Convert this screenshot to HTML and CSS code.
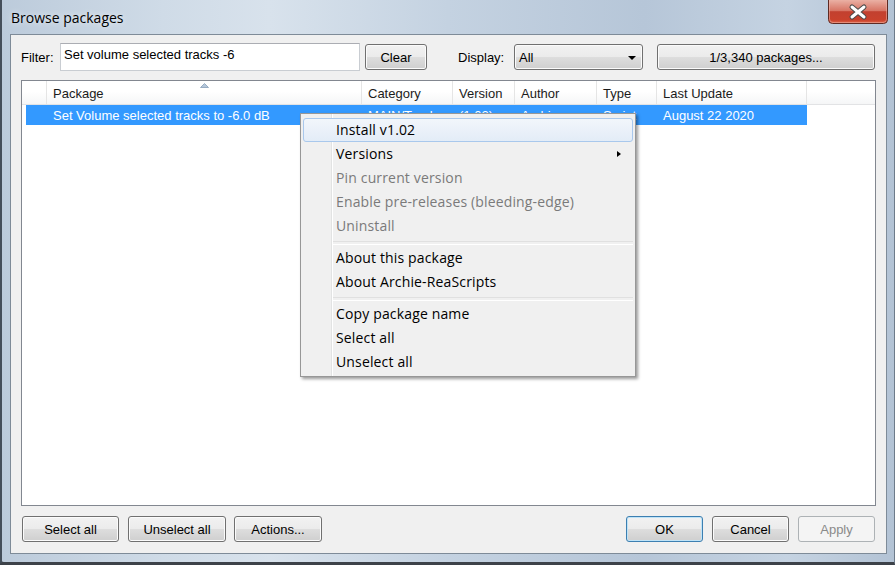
FILE: index.html
```html
<!DOCTYPE html>
<html lang="en">
  <head>
    <meta charset="UTF-8" />
    <title>Browse packages</title>
    <link rel="stylesheet" href="styles.css">
  </head>
  <body>
    <div class="window">
      <div class="titlebar">
        <span class="title">Browse packages</span>
        <div class="close">
          <svg width="60" height="24" viewBox="0 0 60 24">
            <defs>
              <linearGradient id="red" x1="0" y1="0" x2="0" y2="1">
                <stop offset="0" stop-color="#eab0a4" />
                <stop offset="0.45" stop-color="#d77565" />
                <stop offset="0.5" stop-color="#c2402f" />
                <stop offset="0.85" stop-color="#c9412c" />
                <stop offset="1" stop-color="#e2694c" />
              </linearGradient>
            </defs>
            <path d="M0.5 0 V19.5 Q0.5 23.5 4.5 23.5 H55.5 Q59.5 23.5 59.5 19.5 V0" fill="url(#red)" stroke="#5e2a23" />
            <path d="M1.5 0 V19 Q1.5 22.5 5 22.5 H55 Q58.5 22.5 58.5 19 V0" fill="none" stroke="#f0b9ae" stroke-opacity="0.5" />
            <path d="M24 7 L36 17 M36 7 L24 17" stroke="#4a4a4a" stroke-width="5" stroke-linecap="round" />
            <path d="M24 7 L36 17 M36 7 L24 17" stroke="#ffffff" stroke-width="3" stroke-linecap="round" />
          </svg>
        </div>
      </div>

      <div class="client">
        <div class="toprow">
          <span class="lbl lbl-filter">Filter:</span>
          <div class="textbox">Set volume selected tracks -6</div>
          <button class="btn btn-clear">Clear</button>
          <span class="lbl lbl-display">Display:</span>
          <div class="combo">
            <span>All</span>
            <span class="arrow"></span>
          </div>
          <button class="btn btn-count">1/3,340 packages...</button>
        </div>

        <div class="list">
          <div class="header">
            <div class="col c0"></div>
            <div class="col c1">
              Package
              <svg class="sort" width="9" height="5" viewBox="0 0 9 5">
                <path d="M0.5 4.5 L4.5 0.5 L8.5 4.5 Z" fill="#b5c7da" stroke="#97acc3" stroke-width="1" />
              </svg>
            </div>
            <div class="col c2">Category</div>
            <div class="col c3">Version</div>
            <div class="col c4">Author</div>
            <div class="col c5">Type</div>
            <div class="col c6">Last Update</div>
          </div>
          <div class="row selected">
            <div class="cell r0"></div>
            <div class="cell c1">Set Volume selected tracks to -6.0 dB</div>
            <div class="cell c2">MAIN/Track</div>
            <div class="cell c3">(1.02)</div>
            <div class="cell c4">Archie</div>
            <div class="cell c5">Script</div>
            <div class="cell c6">August 22 2020</div>
          </div>
        </div>

        <div class="bottomrow">
          <button class="btn btn-sel">Select all</button>
          <button class="btn btn-unsel">Unselect all</button>
          <button class="btn btn-actions">Actions...</button>
          <span class="spacer"></span>
          <button class="btn btn-ok">OK</button>
          <button class="btn btn-cancel">Cancel</button>
          <button class="btn btn-apply" disabled>Apply</button>
        </div>
      </div>

      <!-- right-click menu over the list -->
      <div class="menu">
        <div class="gutter"></div>
        <div class="item hot">Install v1.02</div>
        <div class="item sub">Versions<span class="subarrow"></span></div>
        <div class="item off">Pin current version</div>
        <div class="item off">Enable pre-releases (bleeding-edge)</div>
        <div class="item off">Uninstall</div>
        <div class="sep"></div>
        <div class="item">About this package</div>
        <div class="item">About Archie-ReaScripts</div>
        <div class="sep"></div>
        <div class="item">Copy package name</div>
        <div class="item">Select all</div>
        <div class="item">Unselect all</div>
      </div>
    </div>
  </body>
</html>
```

FILE: styles.css
```css
* {
  margin: 0;
  padding: 0;
  box-sizing: border-box;
}
body {
  font-family: "Liberation Sans", Arial, sans-serif;
  font-size: 13px;
  background: #3b4148;
}

.window {
  position: relative;
  width: 895px;
  height: 565px;
  border-left: 2px solid #454f5a;
  border-right: 1px solid #6d7b8a;
  border-bottom: 3px solid #3d4249;
  border-bottom-left-radius: 4px;
  background: linear-gradient(to right, #bccbdb 0%, #cfdbe7 18%, #d8e2ec 30%, #c4d2e1 50%, #b6c6d8 72%, #c5d3e2 88%, #b3c3d5 100%);
}

.titlebar {
  display: flex;
  justify-content: space-between;
  align-items: flex-start;
  height: 34px;
}
.title {
  font-family: "Open Sans", sans-serif;
  font-size: 14px;
  padding: 8px 0 0 9px;
  color: #000;
  text-shadow: 0 0 6px rgba(255, 255, 255, 0.8);
}
.close {
  margin-right: 6px;
  height: 24px;
}
.close svg {
  display: block;
}

.client {
  margin: 0 7px 0 8px;
  height: 520px;
  border: 1px solid #7e8b98;
  background: #f0f0f0;
  padding: 8px 10px 0 10px;
}

.toprow {
  display: flex;
  align-items: center;
  height: 28px;
}
.lbl {
  color: #000;
}
.lbl-filter {
  width: 39px;
}
.lbl-display {
  width: 56px;
  margin-left: 31px;
}
.textbox {
  width: 300px;
  height: 28px;
  background: #fff;
  border: 1px solid #c9cdd2;
  border-top-color: #abadb3;
  padding: 3px 0 0 3px;
}

.btn {
  font-family: "Liberation Sans", Arial, sans-serif;
  font-size: 13px;
  color: #000;
  height: 26px;
  border: 1px solid #707070;
  border-radius: 3px;
  background: linear-gradient(#f2f2f2 0%, #ebebeb 48%, #dddddd 52%, #cfcfcf 100%);
  box-shadow: inset 0 0 0 1px #fbfbfb;
}
.btn-clear {
  width: 62px;
  margin-left: 5px;
}
.btn-count {
  width: 218px;
  margin-left: 14px;
}

.combo {
  display: flex;
  align-items: center;
  justify-content: space-between;
  width: 129px;
  height: 26px;
  padding: 0 6px 0 4px;
  border: 1px solid #707070;
  border-radius: 3px;
  background: linear-gradient(#f2f2f2 0%, #ebebeb 48%, #dddddd 52%, #cfcfcf 100%);
  box-shadow: inset 0 0 0 1px #fbfbfb;
}
.combo .arrow {
  width: 0;
  height: 0;
  border-left: 4px solid transparent;
  border-right: 4px solid transparent;
  border-top: 4px solid #000;
  margin-top: 1px;
}

.list {
  margin-top: 9px;
  height: 426px;
  background: #fff;
  border: 1px solid #828790;
}
.header {
  display: flex;
  height: 24px;
  border-bottom: 1px solid #e2e3e5;
  background: linear-gradient(#ffffff 0%, #ffffff 45%, #f5f6f7 100%);
}
.col {
  position: relative;
  height: 23px;
  line-height: 23px;
  padding: 1px 0 0 6px;
  border-right: 1px solid #e5e5e5;
  color: #1b1b1b;
  white-space: nowrap;
}
.c0 { width: 25px; }
.c1 { width: 315px; }
.c2 { width: 91px; }
.c3 { width: 62px; }
.c4 { width: 82px; }
.c5 { width: 60px; }
.c6 { width: 150px; }
.sort {
  position: absolute;
  left: 153px;
  top: 2px;
}

.row {
  display: flex;
  height: 20px;
  margin-left: 4px;
  width: 781px;
  line-height: 20px;
}
.row.selected {
  background: #3399ff;
  color: #fff;
}
.cell {
  padding: 1px 0 0 6px;
  white-space: nowrap;
  overflow: hidden;
}
.r0 { width: 21px; }

.bottomrow {
  display: flex;
  margin-top: 10px;
  height: 26px;
}
.bottomrow .btn {
  width: 77px;
}
.btn-sel {
  margin-left: 1px;
  width: 97px !important;
}
.btn-unsel {
  margin-left: 9px;
  width: 98px !important;
}
.btn-actions {
  margin-left: 8px;
  width: 88px !important;
}
.spacer {
  flex: 1;
}
.btn-ok {
  border-color: #3c7fb1;
  box-shadow: inset 0 0 0 1px #bfe3f7;
}
.btn-cancel {
  margin-left: 9px;
}
.btn-apply {
  margin-left: 9px;
  margin-right: 1px;
  color: #8a8a8a;
  border-color: #adb2b5;
  background: #f4f4f4;
  box-shadow: none;
}

/* context menu */
.menu {
  position: absolute;
  left: 298px;
  top: 113px;
  width: 336px;
  height: 264px;
  padding: 4px 2px 2px 2px;
  background: #f0f0f0;
  border: 1px solid #979797;
  box-shadow: 2px 2px 3px rgba(0, 0, 0, 0.4);
  font-family: "Open Sans", sans-serif;
  font-size: 14px;
  letter-spacing: 0.15px;
}
.gutter {
  position: absolute;
  left: 30px;
  top: 0;
  bottom: 0;
  width: 2px;
  border-left: 1px solid #e2e3e3;
  border-right: 1px solid #ffffff;
}
.item {
  position: relative;
  height: 24px;
  line-height: 22px;
  padding-left: 32px;
  border: 1px solid transparent;
  color: #000;
}
.item.hot {
  border-color: #a9c8ec;
  border-radius: 3px;
  background: linear-gradient(#f2f6fb, #e3ecf7);
}
.item.off {
  color: #7a7a7a;
}
.subarrow {
  position: absolute;
  right: 11px;
  top: 8px;
  width: 0;
  height: 0;
  border-top: 3.5px solid transparent;
  border-bottom: 3.5px solid transparent;
  border-left: 4px solid #000;
}
.sep {
  height: 8px;
  margin-left: 30px;
  padding-top: 3px;
}
.sep::before {
  content: "";
  display: block;
  height: 2px;
  border-top: 1px solid #e0e0e0;
  border-bottom: 1px solid #ffffff;
}
```
